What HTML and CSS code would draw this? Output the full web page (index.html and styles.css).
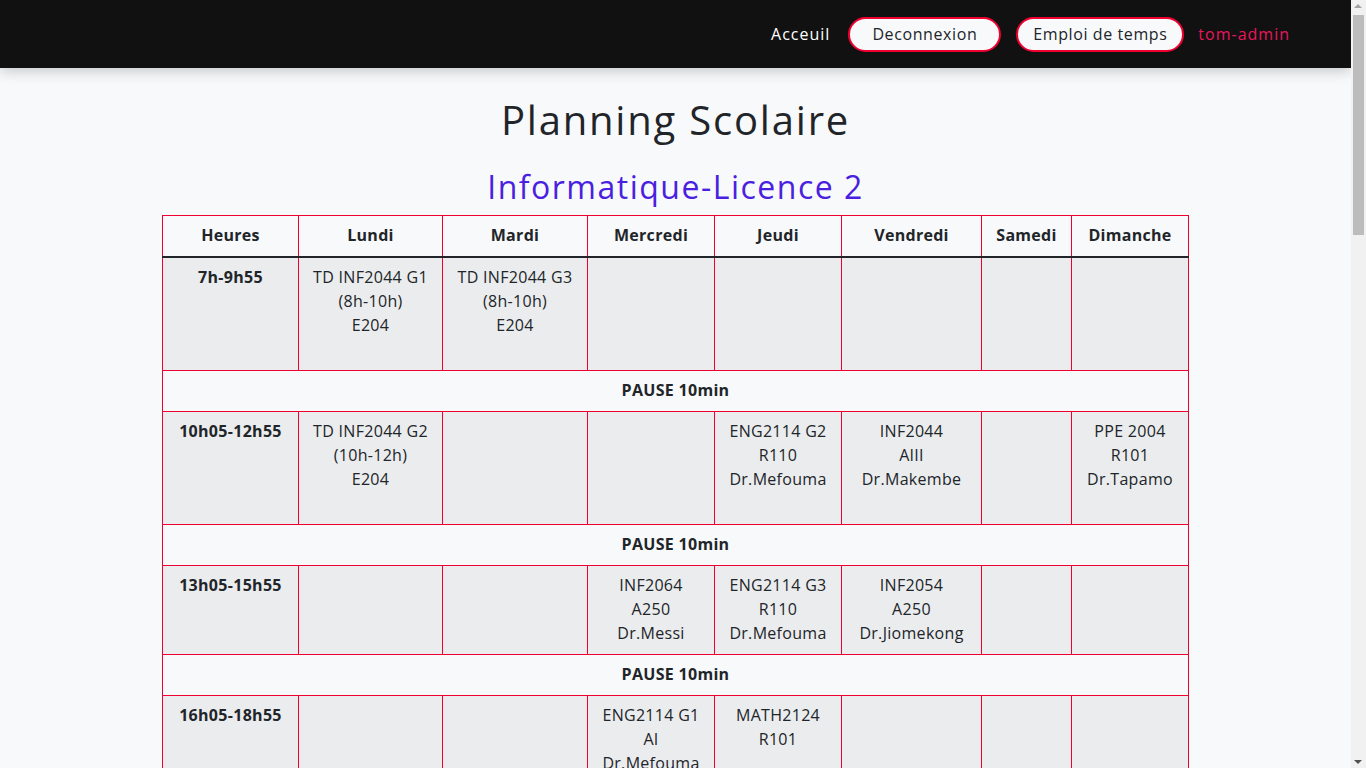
FILE: index.html
```html
<!DOCTYPE html>
<html lang="fr">
<head>
<meta charset="utf-8">
<title>Planning Scolaire</title>
<link rel="stylesheet" href="styles.css">
</head>
<body>
<div class="page">
  <nav class="navbar">
    <a class="nav-link" href="#">Acceuil</a>
    <a class="nav-btn btn-logout" href="#">Deconnexion</a>
    <a class="nav-btn btn-emploi" href="#">Emploi de temps</a>
    <a class="nav-user" href="#">tom-admin</a>
  </nav>
  <main class="main">
    <h1 class="title">Planning Scolaire</h1>
    <h2 class="subtitle">Informatique-Licence 2</h2>
    <table class="planning">
      <colgroup>
        <col class="c-h"><col class="c-lu"><col class="c-ma"><col class="c-me"><col class="c-je"><col class="c-ve"><col class="c-sa"><col class="c-di">
      </colgroup>
      <thead>
        <tr><th>Heures</th><th>Lundi</th><th>Mardi</th><th>Mercredi</th><th>Jeudi</th><th>Vendredi</th><th>Samedi</th><th>Dimanche</th></tr>
      </thead>
      <tbody>
        <tr class="slot">
          <th>7h-9h55</th>
          <td>TD INF2044 G1<br>(8h-10h)<br>E204<br>&nbsp;</td>
          <td>TD INF2044 G3<br>(8h-10h)<br>E204</td>
          <td></td><td></td><td></td><td></td><td></td>
        </tr>
        <tr class="pause"><td colspan="8">PAUSE 10min</td></tr>
        <tr class="slot">
          <th>10h05-12h55</th>
          <td>TD INF2044 G2<br>(10h-12h)<br>E204<br>&nbsp;</td>
          <td></td><td></td>
          <td>ENG2114 G2<br>R110<br>Dr.Mefouma</td>
          <td>INF2044<br>AIII<br>Dr.Makembe</td>
          <td></td>
          <td>PPE 2004<br>R101<br>Dr.Tapamo</td>
        </tr>
        <tr class="pause"><td colspan="8">PAUSE 10min</td></tr>
        <tr class="slot">
          <th>13h05-15h55</th>
          <td></td><td></td>
          <td>INF2064<br>A250<br>Dr.Messi</td>
          <td>ENG2114 G3<br>R110<br>Dr.Mefouma</td>
          <td>INF2054<br>A250<br>Dr.Jiomekong</td>
          <td></td><td></td>
        </tr>
        <tr class="pause"><td colspan="8">PAUSE 10min</td></tr>
        <tr class="slot">
          <th>16h05-18h55</th>
          <td></td><td></td>
          <td>ENG2114 G1<br>AI<br>Dr.Mefouma</td>
          <td>MATH2124<br>R101</td>
          <td></td><td></td><td></td>
        </tr>
      </tbody>
    </table>
  </main>
</div>
<div class="scrollbar" aria-hidden="true">
  <span class="sb-up"></span>
  <span class="sb-thumb"></span>
  <span class="sb-down"></span>
</div>
</body>
</html>
```
FILE: styles.css
```css
html, body {
  margin: 0;
  padding: 0;
}
html {
  overflow: hidden;
}
body {
  background: #f8f9fa;
  color: #212529;
  font-family: "Open Sans", "Liberation Sans", sans-serif;
  font-size: 16px;
  line-height: 24px;
  letter-spacing: 0.3px;
}
.page {
  width: 1351px;
}
.navbar {
  height: 68px;
  background: #111111;
  display: flex;
  align-items: center;
  justify-content: flex-end;
  padding-right: 61px;
  box-shadow: 0 4px 12px rgba(0,0,0,0.18);
  position: relative;
}
.navbar a {
  text-decoration: none;
  letter-spacing: 0.6px;
}
.navbar .nav-link,
.navbar .nav-user {
  letter-spacing: 1px;
}
.nav-link {
  color: #ffffff;
  margin-right: 18px;
}
.nav-btn {
  color: #212529;
  background: #f8f9fa;
  border: 2px solid #f00030;
  border-radius: 18px;
  height: 35px;
  box-sizing: border-box;
  display: flex;
  align-items: center;
  justify-content: center;
  margin-right: 15px;
}
.btn-logout { width: 153px; }
.btn-emploi { width: 168px; margin-right: 14px; }
.nav-user {
  color: #e8175d;
}
.main {
  padding-top: 28px;
}
.title {
  margin: 0 0 24px;
  text-align: center;
  font-weight: 500;
  font-size: 40px;
  line-height: 48px;
  letter-spacing: 1.8px;
}
.subtitle {
  margin: 0 0 9px;
  text-align: center;
  font-weight: 500;
  font-size: 32px;
  line-height: 38px;
  letter-spacing: 1.5px;
  color: #4a1fe0;
}
.planning {
  width: 1026px;
  margin: 0 auto;
  border-collapse: collapse;
  table-layout: fixed;
}
.c-h { width: 136px; }
.c-lu { width: 144px; }
.c-ma { width: 145px; }
.c-me { width: 127px; }
.c-je { width: 127px; }
.c-ve { width: 140px; }
.c-sa { width: 90px; }
.c-di { width: 117px; }
.planning th,
.planning td {
  border: 1px solid #f00030;
  padding: 7px 8px 9px;
  text-align: center;
  vertical-align: top;
}
.planning thead th {
  background: #f8f9fa;
  font-weight: 700;
  border-bottom: 2px solid #212529;
}
.slot th,
.slot td {
  background: #ebecee;
}
.slot th {
  font-weight: 700;
}
.pause td {
  background: #f8f9fa;
  font-weight: 700;
}
.scrollbar {
  position: fixed;
  top: 0;
  right: 0;
  width: 15px;
  height: 100vh;
  background: #f1f1f1;
}
.sb-thumb {
  position: absolute;
  top: 15px;
  left: 2px;
  width: 11px;
  height: 220px;
  background: #bcbcbc;
}
.sb-up,
.sb-down {
  position: absolute;
  left: 3px;
  width: 0;
  height: 0;
  border-left: 4px solid transparent;
  border-right: 4px solid transparent;
}
.sb-up {
  top: 4px;
  border-bottom: 4px solid #a3a3a3;
}
.sb-down {
  bottom: 4px;
  border-top: 4px solid #505050;
}
```
